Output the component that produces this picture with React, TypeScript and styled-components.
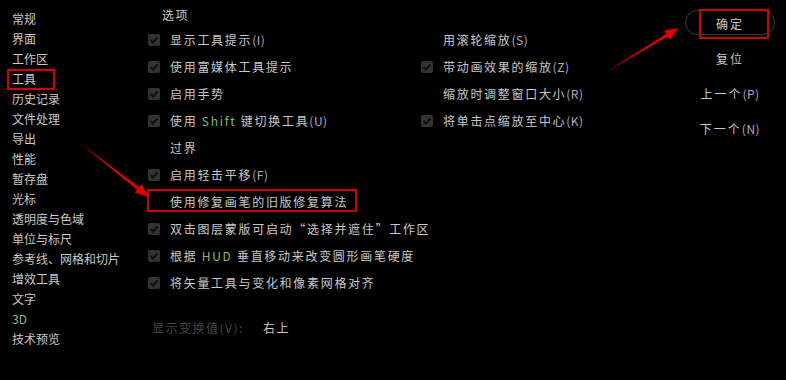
import React from 'react';
import styled, { createGlobalStyle } from 'styled-components';

const Global = createGlobalStyle`
  html, body { margin: 0; padding: 0; background: #000; }
  body { font-family: "Noto Sans CJK SC", "Liberation Sans", sans-serif; }
`;

const Page = styled.div`
  position: relative;
  width: 786px;
  height: 380px;
  background: #000;
  color: #c8c8c8;
  display: flex;
  overflow: hidden;
`;

const Sidebar = styled.ul`
  list-style: none;
  margin: 0;
  padding: 9px 0 0 12px;
  width: 136px;
  flex: none;
`;

const NavItem = styled.li<{ $green?: boolean; $marked?: boolean }>`
  position: relative;
  height: 20px;
  line-height: 20px;
  font-size: 12px;
  color: ${p => (p.$green ? '#8fb88f' : '#c8c8c8')};
  &::after {
    content: '';
    display: ${p => (p.$marked ? 'block' : 'none')};
    position: absolute;
    left: -5px;
    top: 0;
    width: 44px;
    height: 17px;
    border: 2px solid #d20000;
  }
`;

const Main = styled.div`
  flex: 1;
  display: flex;
  flex-direction: column;
  padding-top: 4px;
`;

const Header = styled.div`
  height: 22px;
  line-height: 22px;
  padding-left: 14px;
  font-size: 12px;
  letter-spacing: 1.5px;
`;

const Columns = styled.div`
  display: grid;
  grid-template-columns: 273px 1fr;
`;

const Column = styled.div`
  display: flex;
  flex-direction: column;
`;

const Row = styled.div<{ $marked?: boolean }>`
  position: relative;
  height: 27px;
  display: flex;
  align-items: center;
  gap: 10px;
  font-size: 12px;
  letter-spacing: 1.7px;
  white-space: nowrap;
  &::after {
    content: '';
    display: ${p => (p.$marked ? 'block' : 'none')};
    position: absolute;
    left: -1px;
    top: 1px;
    width: 206px;
    height: 19px;
    border: 2px solid #d20000;
  }
`;

const Label = styled.span``;

const BoxSlot = styled.span`
  width: 12px;
  height: 12px;
  flex: none;
  display: inline-flex;
`;

const Accent = styled.span`
  color: #7fbf6a;
`;

const Key = styled.span`
  color: #b0aac4;
  letter-spacing: 0.5px;
`;

const Footer = styled.div`
  margin-top: 17px;
  display: flex;
  align-items: center;
  height: 28px;
  padding-left: 4px;
  font-size: 12px;
  letter-spacing: 1.5px;
`;

const Dim = styled.span`
  color: #474747;
  width: 111px;
`;

const Buttons = styled.div`
  width: 100px;
  flex: none;
  margin-right: 6px;
  padding-top: 10px;
  display: flex;
  flex-direction: column;
  align-items: center;
  gap: 10px;
`;

const Btn = styled.div<{ $primary?: boolean; $marked?: boolean }>`
  position: relative;
  width: 90px;
  height: 25px;
  line-height: 25px;
  text-align: center;
  font-size: 12px;
  letter-spacing: 2px;
  color: #c8c8c8;
  border: 1px solid ${p => (p.$primary ? '#3c3c3c' : 'transparent')};
  border-radius: 13px;
  box-sizing: border-box;
  &::after {
    content: '';
    display: ${p => (p.$marked ? 'block' : 'none')};
    position: absolute;
    left: 13px;
    top: -2px;
    width: 66px;
    height: 26px;
    border: 2px solid #d20000;
    border-radius: 0;
  }
`;

const Overlay = styled.svg`
  position: absolute;
  left: 0;
  top: 0;
  pointer-events: none;
`;

function Check({ on = true }: { on?: boolean }) {
  return (
    <BoxSlot>
      {on && (
        <svg width="12" height="12" viewBox="0 0 12 12">
          <rect x="0" y="0" width="12" height="12" rx="2" fill="#333" />
          <path d="M2.5 6 L5 8.6 L9.6 3.4" stroke="#121212" strokeWidth="2.2" fill="none" />
        </svg>
      )}
    </BoxSlot>
  );
}

const nav = [
  '常规', '界面', '工作区', '工具', '历史记录', '文件处理', '导出', '性能', '暂存盘',
  '光标', '透明度与色域', '单位与标尺', '参考线、网格和切片', '增效工具', '文字', '3D', '技术预览',
];

function Arrow({ x1, y1, x2, y2 }: { x1: number; y1: number; x2: number; y2: number }) {
  const dx = x2 - x1;
  const dy = y2 - y1;
  const len = Math.hypot(dx, dy);
  const ux = dx / len;
  const uy = dy / len;
  const nx = -uy;
  const ny = ux;
  const hb = 14;
  const bx = x2 - ux * hb;
  const by = y2 - uy * hb;
  const pts = [
    [x1, y1],
    [bx + nx * 1.6, by + ny * 1.6],
    [bx + nx * 5.5, by + ny * 5.5],
    [x2, y2],
    [bx - nx * 5.5, by - ny * 5.5],
    [bx - nx * 1.6, by - ny * 1.6],
  ]
    .map(p => p.join(','))
    .join(' ');
  return <polygon points={pts} fill="#e00000" />;
}

export default function App() {
  return (
    <>
      <Global />
      <Page>
        <Sidebar>
          {nav.map(n => (
            <NavItem key={n} $green={n === '3D'} $marked={n === '工具'}>{n}</NavItem>
          ))}
        </Sidebar>
        <Main>
          <Header>选项</Header>
          <Columns>
            <Column>
              <Row><Check /><Label>显示工具提示<Key>(I)</Key></Label></Row>
              <Row><Check /><Label>使用富媒体工具提示</Label></Row>
              <Row><Check /><Label>启用手势</Label></Row>
              <Row><Check /><Label>使用 <Accent>Shift</Accent> 键切换工具<Key>(U)</Key></Label></Row>
              <Row><Check on={false} /><Label>过界</Label></Row>
              <Row><Check /><Label>启用轻击平移<Key>(F)</Key></Label></Row>
              <Row $marked><Check on={false} /><Label>使用修复画笔的旧版修复算法</Label></Row>
              <Row><Check /><Label>双击图层蒙版可启动“选择并遮住”工作区</Label></Row>
              <Row><Check /><Label>根据 <Accent>HUD</Accent> 垂直移动来改变圆形画笔硬度</Label></Row>
              <Row><Check /><Label>将矢量工具与变化和像素网格对齐</Label></Row>
            </Column>
            <Column>
              <Row><Check on={false} /><Label>用滚轮缩放<Key>(S)</Key></Label></Row>
              <Row><Check /><Label>带动画效果的缩放<Key>(Z)</Key></Label></Row>
              <Row><Check on={false} /><Label>缩放时调整窗口大小<Key>(R)</Key></Label></Row>
              <Row><Check /><Label>将单击点缩放至中心<Key>(K)</Key></Label></Row>
            </Column>
          </Columns>
          <Footer>
            <Dim>显示变换值(V):</Dim>
            <span>右上</span>
          </Footer>
        </Main>
        <Buttons>
          <Btn $primary $marked>确定</Btn>
          <Btn>复位</Btn>
          <Btn>上一个<Key>(P)</Key></Btn>
          <Btn>下一个<Key>(N)</Key></Btn>
        </Buttons>
        <Overlay width="786" height="380">
          <Arrow x1={80} y1={143} x2={149} y2={197} />
          <Arrow x1={603} y1={74} x2={679} y2={28} />
        </Overlay>
      </Page>
    </>
  );
}
